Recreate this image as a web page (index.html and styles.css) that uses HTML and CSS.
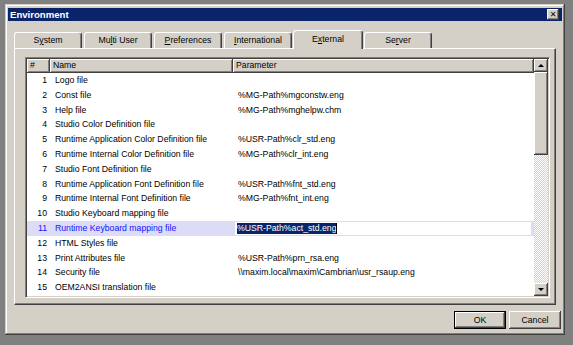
FILE: index.html
```html
<!DOCTYPE html>
<html lang="en">
<head>
  <meta charset="UTF-8">
  <title>Environment</title>
  <link rel="stylesheet" href="styles.css">
</head>
<body>

  <div class="dialog">
    <div class="titlebar">
      <span class="title">Environment</span>
      <button class="close-button"><span class="cross">&#x2715;</span></button>
    </div>

    <div class="tabs">
      <div class="tab">S<u>y</u>stem</div>
      <div class="tab">Mu<u>l</u>ti User</div>
      <div class="tab"><u>P</u>references</div>
      <div class="tab"><u>I</u>nternational</div>
      <div class="tab selected">E<u>x</u>ternal</div>
      <div class="tab">Se<u>r</u>ver</div>
    </div>

    <div class="panel">
      <div class="list">
        <div class="table">
          <div class="row header">
            <div class="head-cell">#</div>
            <div class="head-cell">Name</div>
            <div class="head-cell">Parameter</div>
          </div>
          <div class="row"><div class="num">1</div><div class="name">Logo file</div><div class="param"></div></div>
          <div class="row"><div class="num">2</div><div class="name">Const file</div><div class="param">%MG-Path%mgconstw.eng</div></div>
          <div class="row"><div class="num">3</div><div class="name">Help file</div><div class="param">%MG-Path%mghelpw.chm</div></div>
          <div class="row"><div class="num">4</div><div class="name">Studio Color Definition file</div><div class="param"></div></div>
          <div class="row"><div class="num">5</div><div class="name">Runtime Application Color Definition file</div><div class="param">%USR-Path%clr_std.eng</div></div>
          <div class="row"><div class="num">6</div><div class="name">Runtime Internal Color Definition file</div><div class="param">%MG-Path%clr_int.eng</div></div>
          <div class="row"><div class="num">7</div><div class="name">Studio Font Definition file</div><div class="param"></div></div>
          <div class="row"><div class="num">8</div><div class="name">Runtime Application Font Definition file</div><div class="param">%USR-Path%fnt_std.eng</div></div>
          <div class="row"><div class="num">9</div><div class="name">Runtime Internal Font Definition file</div><div class="param">%MG-Path%fnt_int.eng</div></div>
          <div class="row"><div class="num">10</div><div class="name">Studio Keyboard mapping file</div><div class="param"></div></div>
          <div class="row active">
            <div class="num">11</div>
            <div class="name">Runtime Keyboard mapping file</div>
            <div class="param"><div class="editor"><span class="selection">%USR-Path%act_std.eng</span><span class="caret"></span></div></div>
          </div>
          <div class="row"><div class="num">12</div><div class="name">HTML Styles file</div><div class="param"></div></div>
          <div class="row"><div class="num">13</div><div class="name">Print Attributes file</div><div class="param">%USR-Path%prn_rsa.eng</div></div>
          <div class="row"><div class="num">14</div><div class="name">Security file</div><div class="param">\\maxim.local\maxim\Cambrian\usr_rsaup.eng</div></div>
          <div class="row"><div class="num">15</div><div class="name">OEM2ANSI translation file</div><div class="param"></div></div>
        </div>

        <div class="scrollbar">
          <div class="scroll-button"><span class="arrow up"></span></div>
          <div class="thumb"></div>
          <div class="track"></div>
          <div class="scroll-button"><span class="arrow down"></span></div>
        </div>
      </div>
    </div>

    <div class="footer">
      <button class="button default">OK</button>
      <button class="button">Cancel</button>
    </div>
  </div>

</body>
</html>
```

FILE: styles.css
```css
body {
  margin: 0;
  background-color: #808080;
  font-family: "Liberation Sans", Arial, sans-serif;
  font-size: 8.7px;
  color: #000;
}

.dialog {
  width: 560px;
  height: 331px;
  margin: 4px 0 0 5px;
  padding: 4px 3px 3px 3px;
  box-sizing: border-box;
  background-color: #d4d0c8;
  box-shadow: inset -1px -1px #404040, inset 1px 1px #d4d0c8, inset -2px -2px #808080, inset 2px 2px #fff;
  display: flex;
  flex-direction: column;
}

/* title bar */

.titlebar {
  height: 13px;
  background-color: #0a246a;
  color: #fff;
  display: flex;
  align-items: center;
  justify-content: space-between;
  padding: 0 3px 0 2px;
}

.title {
  font-weight: bold;
  font-size: 9.6px;
}

.close-button {
  width: 12px;
  height: 11px;
  padding: 0;
  border: none;
  background-color: #d4d0c8;
  box-shadow: inset -1px -1px #404040, inset 1px 1px #fff, inset -2px -2px #808080;
  display: flex;
  align-items: center;
  justify-content: center;
}

.cross {
  font-family: "DejaVu Sans", sans-serif;
  font-size: 8px;
  font-weight: bold;
  line-height: 8px;
  color: #000;
}

/* tabs */

.tabs {
  display: flex;
  height: 18px;
  margin: 9px 0 0 6px;
  align-items: flex-end;
}

.tab {
  width: 68px;
  height: 16px;
  margin-right: 2px;
  box-sizing: border-box;
  display: flex;
  align-items: center;
  justify-content: center;
  border-top: 1px solid #fff;
  border-left: 1px solid #fff;
  border-right: 1px solid #404040;
  border-radius: 3px 3px 0 0;
  box-shadow: inset -1px 0 #808080;
  padding-bottom: 1px;
}

.tab.selected {
  height: 19px;
  margin: 0 1px -1px -1px;
  width: 70px;
  background-color: #d4d0c8;
  position: relative;
  z-index: 1;
  padding-bottom: 3px;
}

/* panel */

.panel {
  height: 257px;
  width: 542px;
  margin-left: 6px;
  box-sizing: border-box;
  border-top: 1px solid #fff;
  border-left: 1px solid #fff;
  border-right: 1px solid #404040;
  border-bottom: 1px solid #404040;
  box-shadow: inset -1px -1px #808080;
  padding: 8px 5px 6px 10px;
}

.list {
  height: 241px;
  width: 525px;
  box-sizing: border-box;
  border-top: 1px solid #808080;
  border-left: 1px solid #808080;
  border-right: 1px solid #fff;
  border-bottom: 1px solid #fff;
  box-shadow: inset 1px 1px #404040, inset -1px -1px #d4d0c8;
  padding: 1px;
  display: flex;
  background-color: #fff;
}

.table {
  flex: 1;
  overflow: hidden;
}

.row {
  display: grid;
  grid-template-columns: 23px 183px 1fr;
  height: 14.8px;
  line-height: 14.8px;
  white-space: nowrap;
}

.row.header {
  height: 14px;
  line-height: 13px;
}

.head-cell {
  background-color: #d4d0c8;
  box-shadow: inset -1px -1px #404040, inset 1px 1px #fff, inset -2px -2px #808080;
  padding-left: 3px;
}

.num {
  text-align: right;
  padding-right: 3px;
}

.name {
  padding-left: 5px;
}

.param {
  padding-left: 5px;
}

.row.active {
  background-color: #dcdcf7;
  color: #1414ff;
}

.row.active .param {
  padding: 1px 3px 1px 2px;
  color: #000;
}

.editor {
  background-color: #fff;
  height: 12.8px;
  line-height: 12.8px;
  padding-left: 2px;
  display: flex;
  align-items: center;
}

.selection {
  background-color: #0a246a;
  color: #fff;
  line-height: 11px;
}

.caret {
  width: 1px;
  height: 11px;
  background-color: #000;
}

/* scrollbar */

.scrollbar {
  width: 14px;
  display: flex;
  flex-direction: column;
}

.scroll-button {
  height: 13px;
  background-color: #d4d0c8;
  box-shadow: inset -1px -1px #404040, inset 1px 1px #fff, inset -2px -2px #808080;
  display: flex;
  align-items: center;
  justify-content: center;
}

.thumb {
  height: 83px;
  background-color: #d4d0c8;
  box-shadow: inset -1px -1px #404040, inset 1px 1px #fff, inset -2px -2px #808080;
}

.track {
  flex: 1;
  background: repeating-conic-gradient(#fff 0 25%, #d4d0c8 0 50%) 0 0 / 2px 2px;
}

.arrow {
  width: 0;
  height: 0;
  border-left: 3px solid transparent;
  border-right: 3px solid transparent;
}

.arrow.up {
  border-bottom: 3px solid #000;
}

.arrow.down {
  border-top: 3px solid #000;
}

/* buttons */

.footer {
  display: flex;
  justify-content: flex-end;
  gap: 3px;
  margin-top: 6px;
  padding-right: 1px;
}

.button {
  width: 52px;
  height: 18px;
  padding: 0;
  border: none;
  background-color: #d4d0c8;
  font-family: "Liberation Sans", Arial, sans-serif;
  font-size: 8.7px;
  color: #000;
  box-shadow: inset -1px -1px #404040, inset 1px 1px #fff, inset -2px -2px #808080;
}

.button.default {
  border: 1px solid #000;
}
```
